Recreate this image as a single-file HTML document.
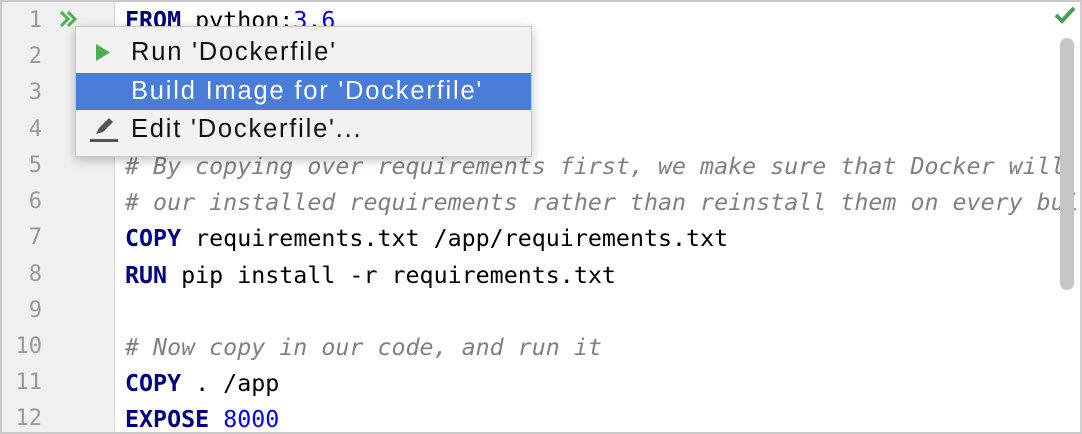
<!DOCTYPE html>
<html><head><style>
html,body{margin:0;padding:0}
body{width:1082px;height:434px;position:relative;overflow:hidden;background:#fff;font-family:"DejaVu Sans Mono","Liberation Mono",monospace}
.frame{position:absolute;left:0;top:0;width:1078px;height:430px;border:2px solid #c9c9c9;border-right-color:#d0d0d0}
.gutter{position:absolute;left:2px;top:2px;width:112px;height:430px;background:#f0f0f0;border-right:1px solid #d5d5d5}
.ln{position:absolute;left:0;width:42px;text-align:right;color:#999;font-size:22px}
.clip{position:absolute;left:0;top:0;width:1080px;height:432px;overflow:hidden}
.code{position:absolute;left:125px;white-space:pre;font-size:23.3px;color:#000}
.k{color:#000080;font-weight:bold}
.n{color:#0000ff}
.c{color:#808080;font-style:italic}
.pop{position:absolute;left:75px;top:26px;width:455px;height:129px;background:#f2f2f2;border:1px solid #c8c8c8;box-shadow:0 3px 10px rgba(0,0,0,.25);font-family:"Liberation Sans",sans-serif;font-size:25.5px;letter-spacing:1.8px;color:#111}
.it{position:absolute;left:0;width:455px;height:37px;line-height:37px}
.it span{position:absolute;left:55px}
.hl{background:#4a7dd8;color:#fff}
.sb{position:absolute;left:1060px;top:38px;width:14px;height:252px;border-radius:7px;background:#c6c6c6}
</style></head><body>
<div class="frame"></div>
<div class="gutter"></div>
<div class="ln" style="top:8px">1</div>
<div class="ln" style="top:44px">2</div>
<div class="ln" style="top:80px">3</div>
<div class="ln" style="top:117px">4</div>
<div class="ln" style="top:153px">5</div>
<div class="ln" style="top:189px">6</div>
<div class="ln" style="top:225px">7</div>
<div class="ln" style="top:262px">8</div>
<div class="ln" style="top:298px">9</div>
<div class="ln" style="top:334px">10</div>
<div class="ln" style="top:370px">11</div>
<div class="ln" style="top:406px">12</div>
<svg style="position:absolute;left:60px;top:11px" width="18" height="16"><path d="M1 1l7 7-7 7M8 1l7 7-7 7" stroke="#4caf50" stroke-width="3" fill="none"/></svg>
<div class="clip">
<div class="code" style="top:7px"><span class="k">FROM</span> python:<span class="n">3.6</span></div>
<div class="code" style="top:153px"><span class="c"># By copying over requirements first, we make sure that Docker will cache</span></div>
<div class="code" style="top:189px"><span class="c"># our installed requirements rather than reinstall them on every build</span></div>
<div class="code" style="top:225px"><span class="k">COPY</span> requirements.txt /app/requirements.txt</div>
<div class="code" style="top:262px"><span class="k">RUN</span> pip install -r requirements.txt</div>
<div class="code" style="top:334px"><span class="c"># Now copy in our code, and run it</span></div>
<div class="code" style="top:370px"><span class="k">COPY</span> . /app</div>
<div class="code" style="top:406px"><span class="k">EXPOSE</span> <span class="n">8000</span></div>
</div>
<svg style="position:absolute;left:1054px;top:6px" width="22" height="18"><path d="M2 9l6 6L20 2" stroke="#4a9d5b" stroke-width="4" fill="none"/></svg>
<div class="sb"></div>
<div class="pop">
<div class="it" style="top:7px"><svg style="position:absolute;left:20px;top:10px" width="14" height="17"><path d="M0 0L14 8.5 0 17z" fill="#4caf50"/></svg><span>Run 'Dockerfile'</span></div>
<div class="it hl" style="top:46px"><span>Build Image for 'Dockerfile'</span></div>
<div class="it" style="top:84px"><svg style="position:absolute;left:14px;top:4px" width="30" height="28"><path d="M6 19l3-6L19 3l4 4L13 17l-7 2z" fill="#555"/><rect x="0" y="24" width="28" height="3" fill="#555"/></svg><span>Edit 'Dockerfile'...</span></div>
</div>
</body></html>
